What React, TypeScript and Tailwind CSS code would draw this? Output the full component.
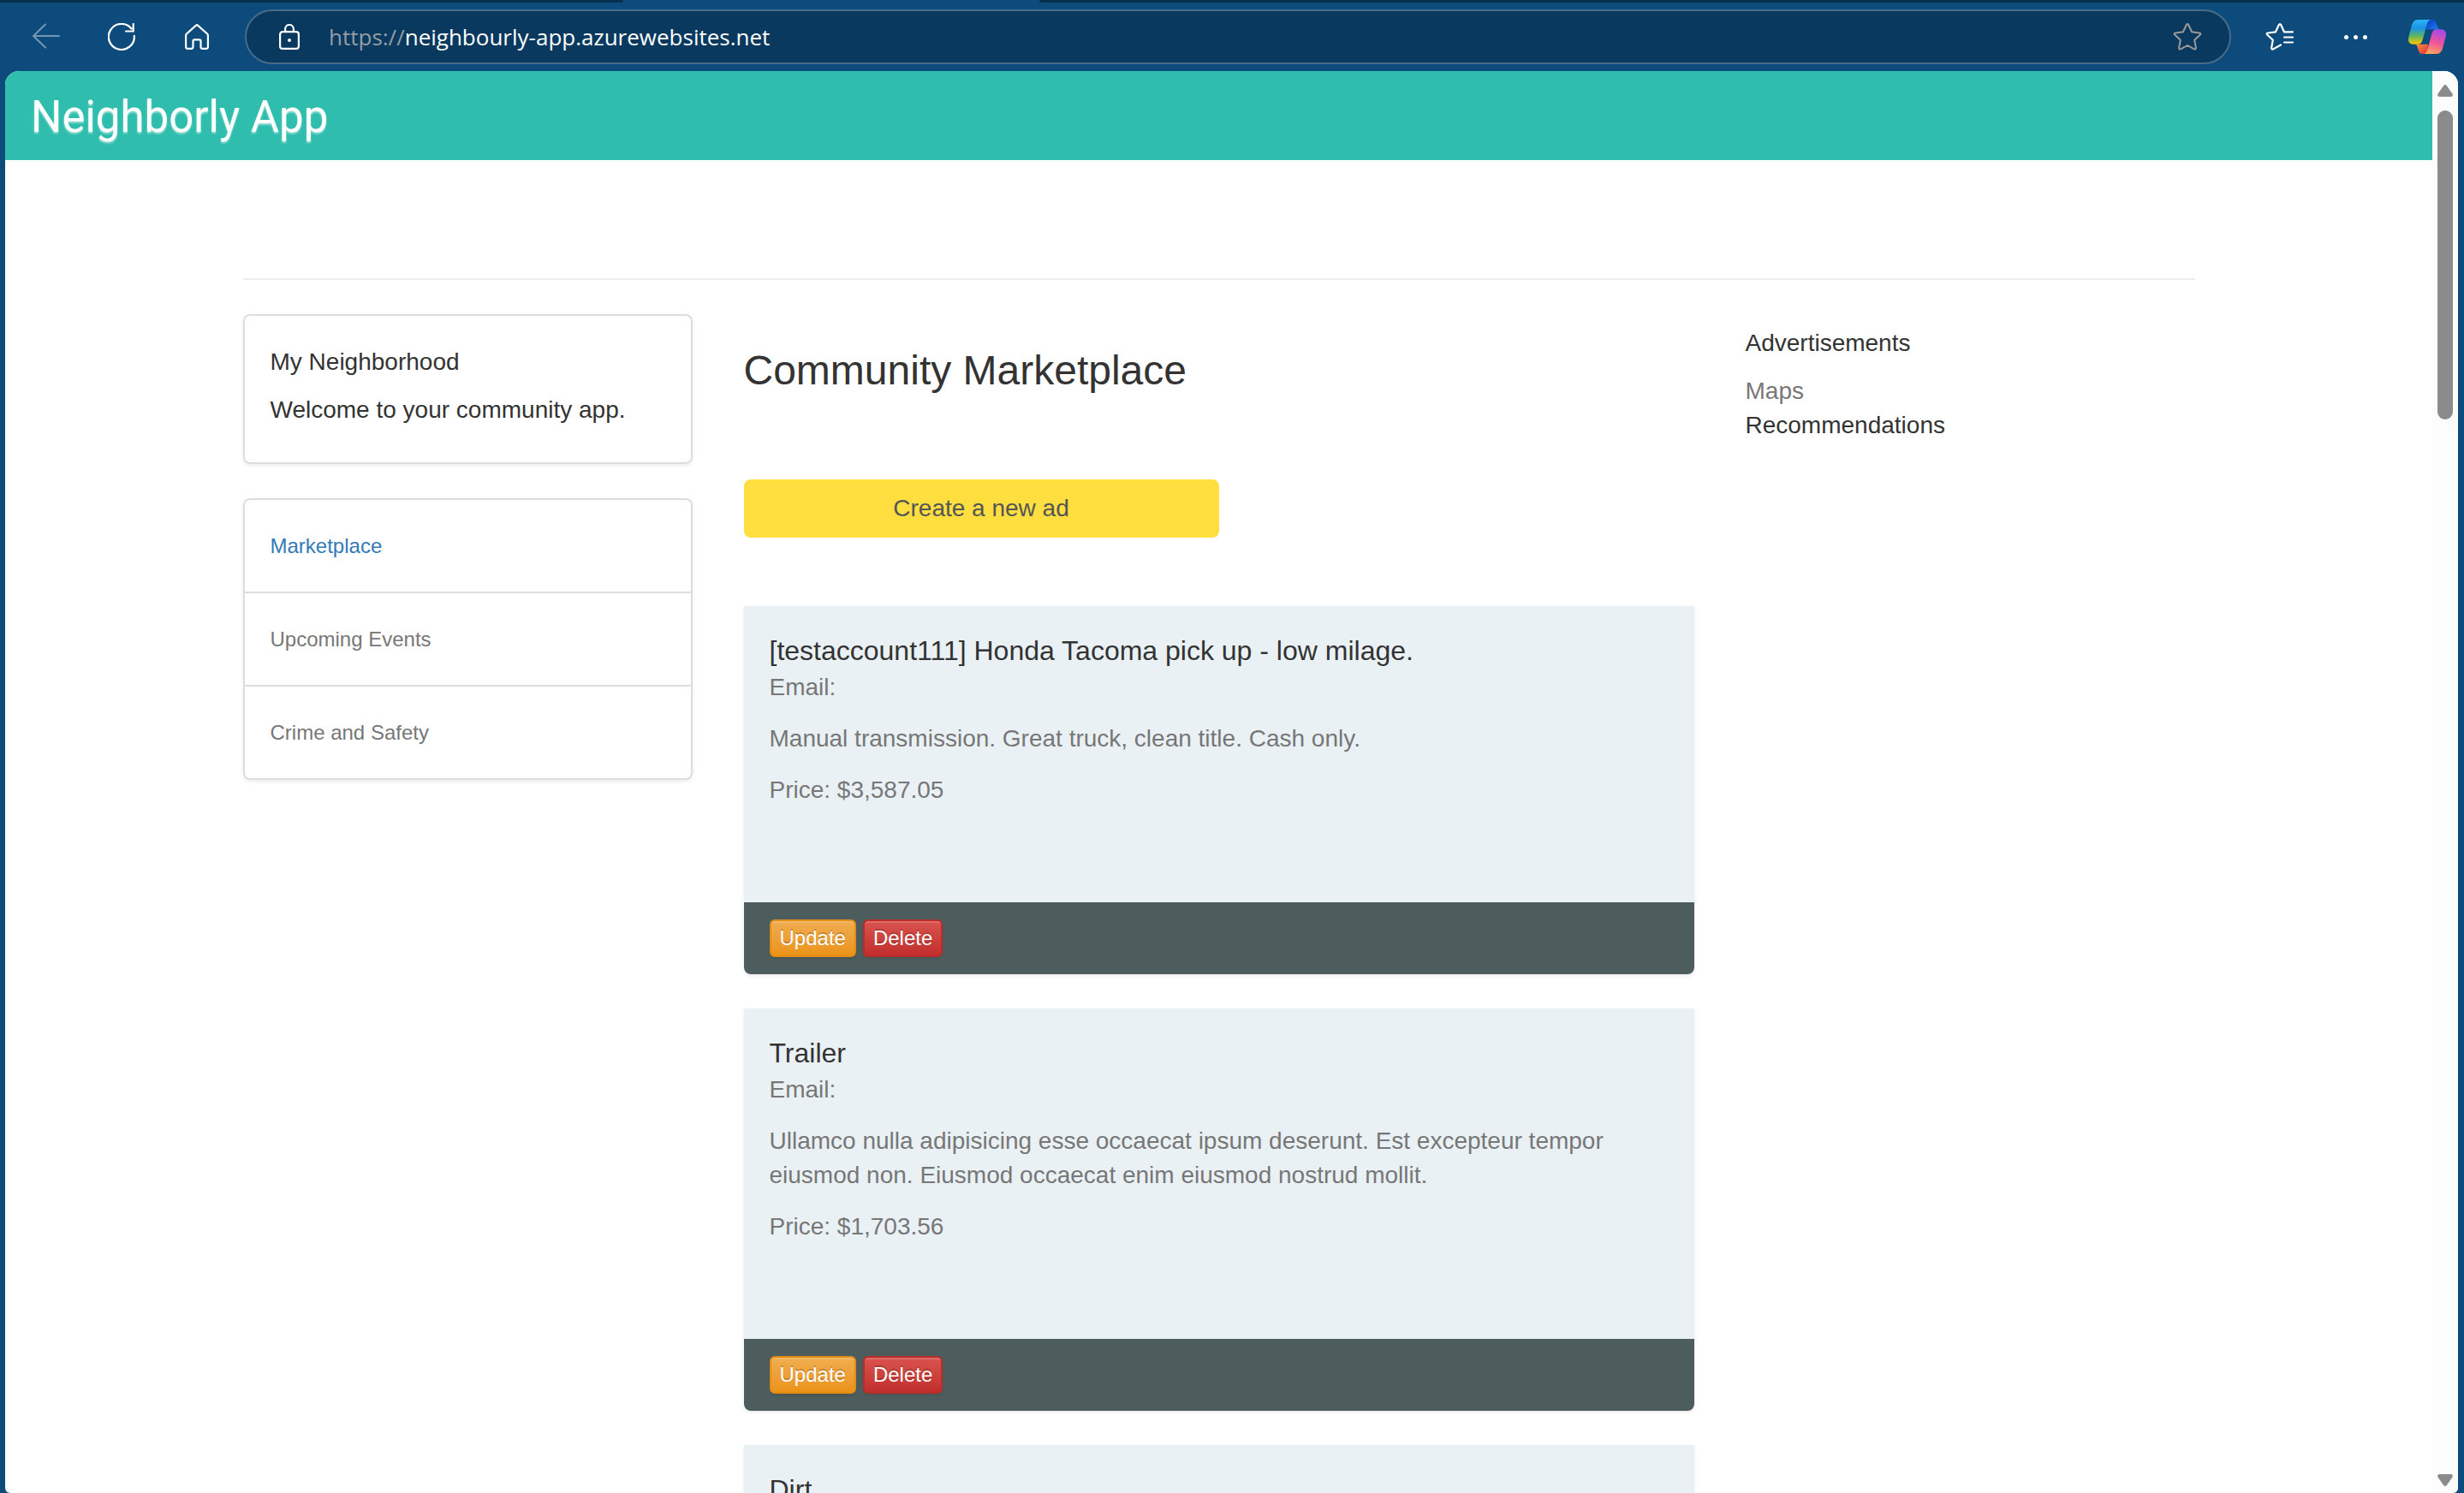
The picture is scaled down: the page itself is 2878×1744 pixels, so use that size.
import { useId } from "react";

type Ad = { title: string; description?: string; price?: string };

const ads: Ad[] = [
  {
    title: "[testaccount111] Honda Tacoma pick up - low milage.",
    description: "Manual transmission. Great truck, clean title. Cash only.",
    price: "$3,587.05",
  },
  {
    title: "Trailer",
    description:
      "Ullamco nulla adipisicing esse occaecat ipsum deserunt. Est excepteur tempor eiusmod non. Eiusmod occaecat enim eiusmod nostrud mollit.",
    price: "$1,703.56",
  },
  { title: "Dirt" },
];

function BackIcon() {
  return (
    <svg viewBox="0 0 32 32" className="size-8" fill="none" stroke="currentColor" strokeWidth="2" strokeLinecap="round" strokeLinejoin="round">
      <path d="M31 15H1M15 1.500L1 15l14 13.500" />
    </svg>
  );
}

function ReloadIcon() {
  return (
    <svg viewBox="0 0 32 32" className="size-8" fill="none" stroke="currentColor" strokeWidth="2.200" strokeLinecap="round">
      <path d="M30.800 14.800A15 15 0 1 1 27.500 6.500M29.700 1v8.500H21" />
    </svg>
  );
}

function HomeIcon() {
  return (
    <svg viewBox="0 0 28 30" className="h-[30px] w-7" fill="none" stroke="currentColor" strokeWidth="2.200" strokeLinejoin="round">
      <path d="M13 1.600q1-.8 2 0L26.100 11.500q.8.700.8 1.800v13.500q0 2-2 2h-4.400q-2 0-2-2v-7q0-1.500-1.500-1.500h-6q-1.500 0-1.500 1.500v7q0 2-2 2H3.100q-2 0-2-2V13.300q0-1.100.8-1.800z" />
    </svg>
  );
}

function LockIcon() {
  return (
    <svg viewBox="0 0 24 30" className="h-[30px] w-6 text-white" fill="none" stroke="currentColor" strokeWidth="2.200">
      <rect x="1.100" y="9.100" width="21.800" height="19.800" rx="3" />
      <path d="M7.100 9V5.900a4.900 4.900 0 0 1 9.800 0V9" />
      <circle cx="12" cy="19" r="2" fill="currentColor" stroke="none" />
    </svg>
  );
}

function StarIcon() {
  return (
    <svg viewBox="0 0 34 34" className="size-[34px]" fill="none" stroke="currentColor" strokeWidth="2" strokeLinejoin="round">
      <path d="M15.800 3q1.200-2 2.400 0l3.900 8.300 9 1.200q2 .5.800 2l-6.700 6.200 1.700 9.300q0 2-2 1.400L17 27l-7.900 4.400q-2 .6-2-1.400l1.700-9.300-6.700-6.200q-1.200-1.500.8-2l9-1.200z" />
    </svg>
  );
}

function FavoritesIcon() {
  return (
    <svg viewBox="0 0 34 34" className="size-[34px]" fill="none" stroke="currentColor" strokeWidth="2.200" strokeLinecap="round" strokeLinejoin="round">
      <path d="M18 26.500L9.100 31.400q-2 .6-2-1.400l1.700-9.300-6.700-6.200q-1.200-1.500.8-2l9-1.200L15.800 3q1.200-2 2.400 0l3.700 8.300H32M22 17.500h10M22 23.500h10" />
    </svg>
  );
}

function CopilotIcon() {
  const id = useId();
  const a = id + "a";
  const b = id + "b";
  const c = id + "c";
  const d = id + "d";
  return (
    <svg viewBox="0 0 44 40" className="h-10 w-11">
      <defs>
        <linearGradient id={a} x1="0" y1="0" x2="0" y2="1">
          <stop offset="0" stopColor="#2bb4f5" />
          <stop offset=".35" stopColor="#1a93e6" />
          <stop offset=".65" stopColor="#5cb562" />
          <stop offset="1" stopColor="#ffc800" />
        </linearGradient>
        <linearGradient id={b} x1="0" y1="0" x2="1" y2="1">
          <stop offset="0" stopColor="#0b35c4" />
          <stop offset="1" stopColor="#1c86ee" />
        </linearGradient>
        <linearGradient id={c} x1="0.600" y1="0" x2="0.300" y2="1">
          <stop offset="0" stopColor="#a44bea" />
          <stop offset=".5" stopColor="#f0529c" />
          <stop offset="1" stopColor="#ffa857" />
        </linearGradient>
        <linearGradient id={d} x1="0" y1="0" x2="1" y2="1">
          <stop offset="0" stopColor="#ff9440" />
          <stop offset="1" stopColor="#e0303c" />
        </linearGradient>
      </defs>
      <path d="M22 0h5c4 0 5 2 6 5l1.300 4c.6 1.700 1.700 2.300 3.700 2.300H21z" fill={"url(#" + b + ")"} />
      <path d="M22 40h-5c-3.500 0-4.700-2-5.500-5l-1.200-4c-.6-1.700-1.600-2.300-3.300-2.300h16z" fill={"url(#" + d + ")"} />
      <path d="M11 0h16c-3 0-4.500 2-5.500 6l-5 18c-.9 3.200-2.500 4.800-5.500 4.800H6c-4.500 0-7-3-5.700-8.300l3.400-13C5 2.700 7.500 0 11 0z" fill={"url(#" + a + ")"} />
      <path d="M33 40H17c3 0 4.500-2 5.500-6l5-18c.9-3.200 2.500-4.800 5.500-4.800h5c4.500 0 7 3 5.700 8.300l-3.400 13C39 37.300 36.500 40 33 40z" fill={"url(#" + c + ")"} />
    </svg>
  );
}

function BrowserBar() {
  return (
    <div className="flex h-[83px] shrink-0 flex-col">
      <div className="flex h-[3px] shrink-0">
        <div className="w-[728px] rounded-br bg-[#07304e]" />
        <div className="w-[486px] bg-[#0c4b7b]" />
        <div className="flex-1 rounded-bl bg-[#07304e]" />
      </div>
      <div className="flex flex-1 items-center pt-2 pr-[21px] pb-2 pl-[38px]">
        <button aria-label="Back" className="mr-14 text-[#7396b3]"><BackIcon /></button>
        <button aria-label="Refresh" className="mr-[58px] text-white"><ReloadIcon /></button>
        <button aria-label="Home" className="text-white"><HomeIcon /></button>
        <div className="ml-[42px] flex h-16 flex-1 items-center rounded-full border-2 border-[#476c8a] bg-[#09395e] pr-8 pl-[38px]">
          <LockIcon />
          <a href="#" className="ml-[34px] font-['Open_Sans',sans-serif] text-[26px] text-white">
            <span className="text-[#949da5]">https://</span>neighbourly-app.azurewebsites.net
          </a>
          <button aria-label="Add to favorites" className="ml-auto text-[#9a9a9a]"><StarIcon /></button>
        </div>
        <button aria-label="Favorites" className="ml-10 text-white"><FavoritesIcon /></button>
        <button aria-label="Settings and more" className="ml-[58px] flex gap-1.5 text-white">
          <span className="size-[5px] rounded-full bg-white" />
          <span className="size-[5px] rounded-full bg-white" />
          <span className="size-[5px] rounded-full bg-white" />
        </button>
        <button aria-label="Copilot" className="ml-12"><CopilotIcon /></button>
      </div>
    </div>
  );
}

function Sidebar() {
  return (
    <aside className="w-1/4 px-[30px]">
      <section className="rounded-lg border-2 border-[#dddddd] px-[30px] pt-[34px] pb-[41px] text-[#333333] shadow-[0_2px_4px_rgba(0,0,0,0.08)]">
        <p className="mb-4 leading-10">My Neighborhood</p>
        <p className="leading-10">Welcome to your community app.</p>
      </section>
      <nav className="mt-10 flex flex-col divide-y-2 divide-[#dddddd] rounded-lg border-2 border-[#dddddd] text-2xl text-[#777777] shadow-[0_2px_4px_rgba(0,0,0,0.08)]">
        <a href="#" className="px-[30px] py-9 leading-[35px] text-[#337ab7]">Marketplace</a>
        <a href="#" className="px-[30px] py-9 leading-[35px]">Upcoming Events</a>
        <a href="#" className="px-[30px] py-9 leading-[35px]">Crime and Safety</a>
      </nav>
    </aside>
  );
}

function AdCard({ ad }: { ad: Ad }) {
  return (
    <article className="mb-10 overflow-hidden rounded-b-lg shadow-[0_2px_4px_rgba(0,0,0,0.08)]">
      <div className="bg-[#e9f1f5] px-[30px] pt-[30px] pb-[111px] text-[#777777]">
        <h2 className="text-[32px] leading-[45px] text-[#333333]">{ad.title}</h2>
        {ad.description && (
          <>
            <p className="mb-5 leading-10">Email:</p>
            <p className="mb-5 leading-10">{ad.description}</p>
            <p className="leading-10">Price: {ad.price}</p>
          </>
        )}
      </div>
      {ad.description && (
        <div className="flex gap-2 bg-[#4d5c5c] px-[30px] py-5 text-2xl text-white">
          <button className="h-11 rounded-md border-2 border-[#e38d13] bg-linear-to-b from-[#f0ad4e] to-[#eb9316] px-2.5 leading-9 shadow-[inset_0_2px_0_rgba(255,255,255,0.15),0_2px_2px_rgba(0,0,0,0.08)] [text-shadow:0_-2px_0_rgba(0,0,0,0.2)]">
            Update
          </button>
          <button className="h-11 rounded-md border-2 border-[#b92c28] bg-linear-to-b from-[#d9534f] to-[#c12e2a] px-2.5 leading-9 shadow-[inset_0_2px_0_rgba(255,255,255,0.15),0_2px_2px_rgba(0,0,0,0.08)] [text-shadow:0_-2px_0_rgba(0,0,0,0.2)]">
            Delete
          </button>
        </div>
      )}
    </article>
  );
}

function Scrollbar() {
  return (
    <div className="flex w-[30px] shrink-0 flex-col items-center bg-[#fcfcfc] pt-4 text-[#8b8b8b]">
      <svg viewBox="0 0 18 14" className="h-3.5 w-[18px] shrink-0" fill="currentColor">
        <path d="M7.200 1q1.800-2 3.600 0l6.700 9.500q1.200 3-1.500 3.500H2q-2.700-.5-1.500-3.500z" />
      </svg>
      <div className="mt-4 h-[361px] w-[18px] shrink-0 rounded-full bg-[#8b8b8b]" />
      <svg viewBox="0 0 18 14" className="mt-auto mb-2 h-3.5 w-[18px] shrink-0 rotate-180" fill="currentColor">
        <path d="M7.200 1q1.800-2 3.600 0l6.700 9.500q1.200 3-1.500 3.500H2q-2.700-.5-1.500-3.500z" />
      </svg>
    </div>
  );
}

export default function App() {
  return (
    <div className="flex h-screen flex-col bg-[#0c4b7b] font-['Liberation_Sans',Arial,sans-serif] text-[28px]">
      <BrowserBar />
      <div className="mr-[7px] ml-1.5 flex min-h-0 flex-1 overflow-hidden rounded-t-2xl rounded-b-md bg-white">
        <div className="min-w-0 flex-1 overflow-y-auto [scrollbar-width:none]">
          <header className="flex h-[104px] items-center bg-[#2fbeae] px-[30px] pt-1">
            <h1 className="font-[Roboto,sans-serif] text-[51px] text-white [text-shadow:0_2px_2px_rgba(255,255,255,0.5)]">Neighborly App</h1>
          </header>
          <div className="mx-auto max-w-[2340px]">
            <hr className="mx-[30px] mt-[138px] mb-10 border-t-2 border-[#eeeeee]" />
            <div className="flex items-start">
              <Sidebar />
              <main className="w-1/2 px-[30px]">
                <h1 className="mt-10 text-5xl leading-[52px] text-[#333333]">Community Marketplace</h1>
                <button className="mt-[101px] mb-20 block h-[68px] w-1/2 rounded-lg bg-[#ffde40] text-[#555555]">Create a new ad</button>
                {ads.map((ad) => (
                  <AdCard key={ad.title} ad={ad} />
                ))}
              </main>
              <aside className="w-1/4 px-[30px] pt-3.5 text-[#333333]">
                <p className="mb-4 leading-10">Advertisements</p>
                <a href="#" className="block leading-10 text-[#777777]">Maps</a>
                <p className="leading-10">Recommendations</p>
              </aside>
            </div>
          </div>
        </div>
        <Scrollbar />
      </div>
    </div>
  );
}
